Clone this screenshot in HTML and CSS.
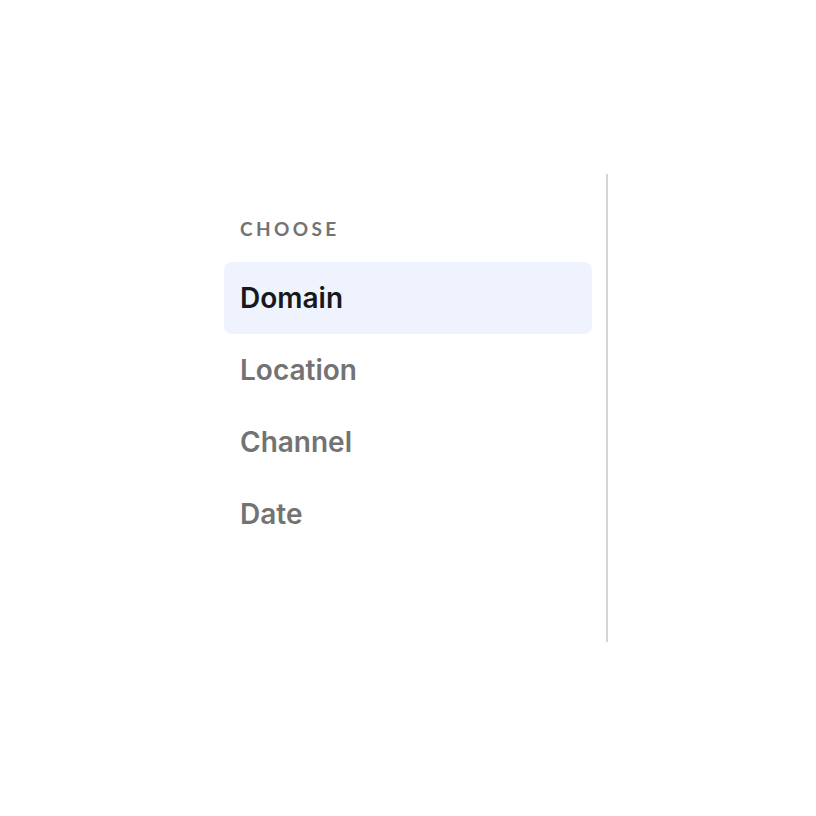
FILE: index.html
```html
<!DOCTYPE html>
<html>
<head>
<meta charset="utf-8">
<link rel="stylesheet" href="styles.css">
</head>
<body>
<div class="page">
  <aside class="sidebar">
    <div class="heading">CHOOSE</div>
    <nav class="menu">
      <div class="item active">Domain</div>
      <div class="item">Location</div>
      <div class="item">Channel</div>
      <div class="item">Date</div>
    </nav>
  </aside>
</div>
</body>
</html>
```
FILE: styles.css
```css
html, body { margin: 0; padding: 0; background: #fff; }
.page {
  width: 816px;
  height: 816px;
  display: flex;
  align-items: center;
  justify-content: center;
}
.sidebar {
  box-sizing: border-box;
  width: 400px;
  height: 468px;
  padding: 44px 14px 0 16px;
  border-right: 2px solid #d4d4d4;
  display: flex;
  flex-direction: column;
}
.heading {
  font-family: Lato, sans-serif;
  font-weight: 700;
  font-size: 19px;
  letter-spacing: 3.4px;
  color: #737373;
  line-height: 22px;
  padding: 0 16px;
  margin-bottom: 22px;
}
.menu { display: flex; flex-direction: column; }
.item {
  height: 72px;
  display: flex;
  align-items: center;
  padding: 0 16px;
  border-radius: 8px;
  font-family: Inter, sans-serif;
  font-weight: 600;
  font-size: 28px;
  color: #737373;
}
.item.active {
  background: #eef3fe;
  color: #18181b;
}
```
